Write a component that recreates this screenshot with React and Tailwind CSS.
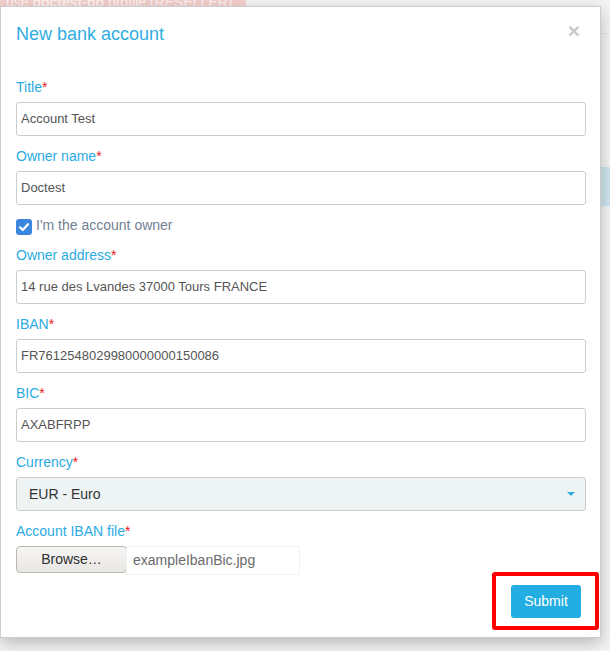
import React from "react";

function Label({ children }) {
  return (
    <div className="text-[14px] leading-[20px] mb-[5px] text-[#2aabe2]">
      {children}
      <span className="text-[#ee1c24]">*</span>
    </div>
  );
}

function TextField({ label, value }) {
  return (
    <div className="mb-[10px]">
      <Label>{label}</Label>
      <div className="h-[34px] w-full border border-[#cccccc] rounded-[3px] bg-white px-[4px] flex items-center text-[13px] text-[#555555]">
        {value}
      </div>
    </div>
  );
}

export default function App() {
  return (
    <div className="relative w-[610px] h-[651px] overflow-hidden bg-[#f4f4f4] font-['Liberation_Sans',Arial,sans-serif]">
      {/* page behind the modal */}
      <div className="flex h-[38px]">
        <div className="w-[246px] h-[38px] bg-[#f4d0cc] pl-[6px] overflow-hidden">
          <div className="-mt-[8px] text-[14px] leading-[20px] text-[#fdf3f2] whitespace-nowrap">
            use <span className="font-bold">doctest-bo</span> profile (RESELLER)
          </div>
        </div>
        <div className="flex-1 h-[34px] border-b border-[#e6e6e6]" />
      </div>
      <div className="mt-[129px] h-[39px] bg-[#d0e6f0]" />

      {/* modal */}
      <div className="absolute left-0 top-[6px] w-[601px] h-[632px] bg-white border border-black/20 shadow-[0_5px_15px_rgba(0,0,0,0.25)] flex flex-col">
        <div className="pt-[14px] pl-[15px] pr-[19px] flex justify-between items-start">
          <h4 className="text-[18px] leading-[26px] text-[#2fadE2]">New bank account</h4>
          <span className="text-[21px] font-bold leading-none text-[#c9c9c9] -mt-[1px] mr-[1px]">×</span>
        </div>

        <div className="pt-[30px] pl-[15px] pr-[14px]">
          <TextField label="Title" value="Account Test" />
          <TextField label="Owner name" value="Doctest" />

          <div className="h-[24px] mb-[6px] flex items-center gap-[4px]">
            <div className="w-[16px] h-[16px] rounded-[3px] bg-[#3a86de] flex items-center justify-center">
              <svg width="12" height="12" viewBox="0 0 12 12">
                <path d="M2 6.3 L4.8 9 L10 3.2" fill="none" stroke="white" strokeWidth="2.2" strokeLinecap="round" strokeLinejoin="round" />
              </svg>
            </div>
            <span className="text-[14px] text-[#717f93] mb-[4px]">I'm the account owner</span>
          </div>

          <TextField label="Owner address" value="14 rue des Lvandes 37000 Tours FRANCE" />
          <TextField label="IBAN" value="FR7612548029980000000150086" />
          <TextField label="BIC" value="AXABFRPP" />

          <div className="mb-[10px]">
            <Label>Currency</Label>
            <div className="h-[34px] w-full border border-[#cccccc] rounded-[3px] bg-[#eef4f4] pl-[12px] pr-[10px] flex items-center justify-between text-[14px] text-[#333333]">
              <span>EUR - Euro</span>
              <span className="w-0 h-0 border-l-[4px] border-r-[4px] border-t-[4px] border-l-transparent border-r-transparent border-t-[#2aabe2]" />
            </div>
          </div>

          <div>
            <Label>Account IBAN file</Label>
            <div className="flex items-start h-[29px]">
              <div className="w-[111px] h-[27px] border border-[#bab6b0] rounded-[4px] bg-gradient-to-b from-[#f7f6f5] to-[#e8e6e3] flex items-center justify-center text-[14px] text-[#2e2e2e]">
                Browse…
              </div>
              <div className="w-[174px] h-[29px] -ml-[1px] border border-[#f1f1f1] bg-white flex items-center pl-[6px] text-[14px] text-[#6a6a6a]">
                exampleIbanBic.jpg
              </div>
            </div>
          </div>
        </div>

        <div className="mt-[10px] pr-[19px] flex justify-end">
          <div className="relative">
            <div className="w-[70px] h-[33px] rounded-[3px] bg-[#22aee2] flex items-center justify-center text-[14px] text-white">
              Submit
            </div>
            <div className="absolute -left-[19px] -right-[18px] -top-[13px] -bottom-[12px] border-[4px] border-[#ff0000] rounded-[3px]" />
          </div>
        </div>
      </div>
    </div>
  );
}
